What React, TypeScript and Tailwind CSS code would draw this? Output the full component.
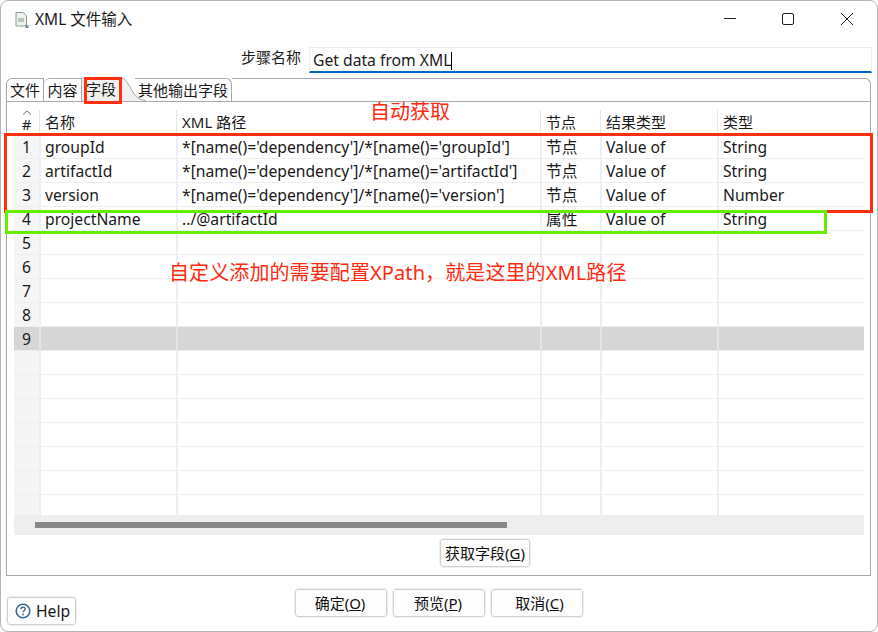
import React from "react";

const cols = ["w-[25px]", "w-[137px]", "w-[364px]", "w-[60px]", "w-[117px]", "flex-1"];
const rows: string[][] = [
  ["1", "groupId", "*[name()='dependency']/*[name()='groupId']", "节点", "Value of", "String"],
  ["2", "artifactId", "*[name()='dependency']/*[name()='artifactId']", "节点", "Value of", "String"],
  ["3", "version", "*[name()='dependency']/*[name()='version']", "节点", "Value of", "Number"],
  ["4", "projectName", "../@artifactId", "属性", "Value of", "String"],
  ["5", "", "", "", "", ""],
  ["6", "", "", "", "", ""],
  ["7", "", "", "", "", ""],
  ["8", "", "", "", "", ""],
  ["9", "", "", "", "", ""],
  ["", "", "", "", "", ""],
  ["", "", "", "", "", ""],
  ["", "", "", "", "", ""],
  ["", "", "", "", "", ""],
  ["", "", "", "", "", ""],
  ["", "", "", "", "", ""],
  ["", "", "", "", "", ""],
];
const headers = ["#", "名称", "XML 路径", "节点", "结果类型", "类型"];

function Btn({ w, children }: { w: string; children: React.ReactNode }) {
  return (
    <button className={`${w} h-[28px] flex items-center justify-center rounded-[3px] border border-[#d0d0d0] bg-[#fdfdfd] text-[15px] text-[#111] outline outline-1 outline-[#efefef]`}>
      {children}
    </button>
  );
}

export default function App() {
  return (
    <div className="relative w-[878px] h-[632px] bg-white overflow-hidden text-[15.7px] leading-none text-[#1a1a1a] [font-family:'Noto_Sans','Noto_Sans_CJK_SC',sans-serif]">
      <div className="w-[878px] h-[632px] flex flex-col bg-white border border-[#b4b4b4] rounded-[8px]">
        {/* title bar */}
        <div className="h-[37px] flex items-center shrink-0">
          <svg width="16" height="18" viewBox="0 0 16 18" className="ml-[13px] mr-[5px]">
            <path d="M2 1.5h7l3.5 3.5v10H2z" fill="#eef3ee" stroke="#8a9a8e" strokeWidth="1" />
            <rect x="4" y="7" width="6" height="4" fill="#b7c4c0" />
            <path d="M11 14l3 2.5M14 14v2.5h-2.5" fill="none" stroke="#50708c" strokeWidth="1" />
          </svg>
          <span className="text-[15.5px]">XML 文件输入</span>
          <div className="ml-auto flex items-center -mt-[1px]">
            <svg width="14" height="14" viewBox="0 0 14 14" className="mr-[44px]"><path d="M1 6.5h12" stroke="#222" strokeWidth="1" /></svg>
            <svg width="14" height="14" viewBox="0 0 14 14" className="mr-[45px]"><rect x="1.5" y="1.5" width="11" height="11" rx="1.5" fill="none" stroke="#222" strokeWidth="1" /></svg>
            <svg width="14" height="14" viewBox="0 0 14 14" className="mr-[23px]"><path d="M1 1l12 12M13 1L1 13" stroke="#222" strokeWidth="1" /></svg>
          </div>
        </div>
        {/* step name */}
        <div className="h-[26px] mt-[9px] flex items-start shrink-0">
          <span className="ml-[240px] w-[68px] text-[15px] mt-[3px]">步骤名称</span>
          <div className="w-[563px] h-[26px] flex items-center pl-[3px] pt-[2px] border border-[#eeeeee] border-b-2 border-b-[#0067c0]">
            <span>Get data from XML</span>
            <span className="w-px h-[18px] bg-black" />
          </div>
        </div>
        {/* tabs */}
        <div className="relative h-[24px] mt-[4px] ml-[5px] w-[865px] flex items-end shrink-0">
          <div className="w-[38px] h-[23px] flex items-center justify-center border border-b-0 border-[#a8a8a8] rounded-tl-[6px] text-[15px]">文件</div>
          <div className="w-[38px] h-[23px] flex items-center justify-center border border-l-0 border-b-0 border-[#a8a8a8] rounded-tl-[6px] text-[15px]">内容</div>
          <div className="relative w-[38px] h-[23px] flex items-center justify-center bg-[#f0f0f0] text-[15px]">字段</div>
          <svg width="26" height="23" viewBox="0 0 26 23" className="shrink-0"><path d="M0 0C6 0 8 6 13 14C16 19 19 22 26 22.5L0 23z" fill="#f0f0f0" /><path d="M0 0C6 0 8 6 13 14C16 19 19 22 26 22.5" fill="none" stroke="#a8a8a8" /></svg>
          <div className="w-[97px] -ml-[11px] h-[23px] flex items-center justify-center border-t border-r border-[#a8a8a8] rounded-tr-[6px] text-[15px] relative">其他输出字段</div>
          <div className="flex-1 h-[23px] border-t border-r border-[#a8a8a8] rounded-tr-[6px]" />
        </div>
        {/* folder body */}
        <div className="ml-[5px] w-[865px] h-[475px] shrink-0 border border-[#a8a8a8] flex flex-col pl-[7px] pr-[6px] pt-[8px]">
          <div className="w-[850px] h-[405px] overflow-hidden shrink-0 flex flex-col">
            <div className="flex h-[25px] shrink-0">
              {headers.map((h, i) => (
                <div key={i} className={`${cols[i]} relative h-[24px] flex items-center ${i === 0 ? "justify-center" : "pl-[5px] border-l border-[#e6e6e6]"} text-[15px]`}>
                  {i === 0 && (
                    <svg width="10" height="5" viewBox="0 0 10 5" className="absolute top-0 left-[8px]"><path d="M1 4.5L5 1l4 3.5" fill="none" stroke="#777" /></svg>
                  )}
                  <span className={i === 0 ? "mt-[4px]" : ""}>{h}</span>
                </div>
              ))}
            </div>
            {rows.map((r, ri) => (
              <div key={ri} className={`flex h-[24px] shrink-0 border-b border-[#eeeeee] ${ri === 8 ? "bg-[#d6d6d6]" : ""}`}>
                {r.map((c, i) => (
                  <div key={i} className={`${cols[i]} h-full flex items-center pt-[2px] ${i === 0 ? `justify-center ${ri === 8 ? "" : "bg-[#f5f5f5]"}` : `pl-[4px] border-l-2 ${ri === 8 ? "border-[#e4e4e4]" : "border-[#eaeef6]"}`}`}>
                    {c}
                  </div>
                ))}
              </div>
            ))}
          </div>
          <div className="w-[850px] h-[20px] shrink-0 bg-[#eeeeee] flex items-center pl-[21px]">
            <div className="w-[472px] h-[6px] bg-[#888888]" />
          </div>
          <div className="flex mt-[4px] ml-[426px]">
            <Btn w="w-[90px]"><span>获取字段(<u>G</u>)</span></Btn>
          </div>
        </div>
        {/* bottom */}
        <div className="relative flex-1">
          <div className="flex justify-center gap-[6px] mt-[13px]">
            <Btn w="w-[92px]"><span className="pr-[2px]">确定(<u>O</u>)</span></Btn>
            <Btn w="w-[92px]"><span className="pr-[2px]">预览(<u>P</u>)</span></Btn>
            <Btn w="w-[92px]"><span className="pl-[5px]">取消(<u>C</u>)</span></Btn>
          </div>
          <button className="absolute left-[6px] top-[21px] w-[69px] h-[28px] flex items-center gap-[5px] pl-[7px] rounded-[3px] border border-[#d0d0d0] bg-[#fdfdfd] outline outline-1 outline-[#efefef]">
            <svg width="16" height="16" viewBox="0 0 16 16">
              <circle cx="8" cy="8" r="6.8" fill="#fff" stroke="#3d6a8f" strokeWidth="1.6" />
              <path d="M5.9 6.2C6 4.8 7 4.2 8 4.2c1.2 0 2.2.8 2.2 1.9 0 1.6-2.2 1.6-2.2 3.2" fill="none" stroke="#3d6a8f" strokeWidth="1.4" />
              <circle cx="8" cy="11.5" r="0.9" fill="#3d6a8f" />
            </svg>
            <span className="pt-[1px]">Help</span>
          </button>
        </div>
      </div>
      {/* annotations */}
      <div className="absolute left-[84px] top-[77px] w-[38px] h-[27px] border-[3px] border-[#ff3010]" />
      <div className="absolute left-[4px] top-[133px] w-[869px] h-[80px] border-[3px] border-[#ff3010]" />
      <div className="absolute left-[5px] top-[210px] w-[822px] h-[24px] border-[3px] border-[#66ee00]" />
      <div className="absolute left-[370px] top-[100px] text-[20px] leading-[24px] text-[#ff2a10]">自动获取</div>
      <div className="absolute left-[169px] top-[261px] text-[20px] leading-[24px] tracking-[0.1px] text-[#ff2a10]">自定义添加的需要配置XPath，就是这里的XML路径</div>
    </div>
  );
}
